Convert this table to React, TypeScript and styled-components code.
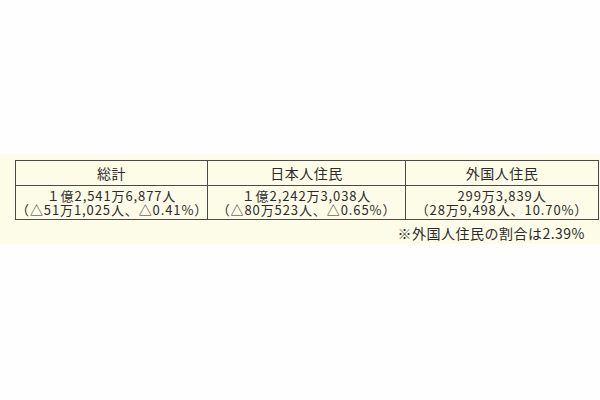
import React from "react";
import styled, { createGlobalStyle } from "styled-components";

const GlobalStyle = createGlobalStyle`
  html, body {
    margin: 0;
    padding: 0;
    background: #fefefe;
  }
  body {
    font-family: "Noto Sans CJK JP", "Noto Sans", sans-serif;
    color: #2b2b2b;
  }
`;

const Band = styled.section`
  margin-top: 154px;
  height: 90px;
  background: #fcfce8;
  padding: 6px 5px 0 15px;
  box-sizing: border-box;
`;

const Table = styled.table`
  width: 580px;
  border-collapse: collapse;
  table-layout: fixed;
`;

const HeadCell = styled.th<{ $w: number }>`
  width: ${(p) => p.$w}px;
  height: 24px;
  padding: 0;
  border: 1px solid #4a4a4a;
  font-size: 14px;
  font-weight: 400;
  text-align: center;
  line-height: 24px;
  letter-spacing: 0.5px;
`;

const Cell = styled.td`
  height: 33px;
  padding: 0;
  border: 1px solid #4a4a4a;
  text-align: center;
  vertical-align: middle;
`;

const Lines = styled.div`
  white-space: nowrap;
  font-size: 13px;
  line-height: 13.5px;
  letter-spacing: 0.9px;
`;

const Note = styled.p`
  margin: 5px 0 0;
  padding-right: 10px;
  text-align: right;
  font-size: 14px;
  line-height: 16px;
  letter-spacing: 0.5px;
`;

const columns = [
  { head: "総計", w: 191, main: "１億2,541万6,877人", sub: "（△51万1,025人、△0.41%）" },
  { head: "日本人住民", w: 197, main: "１億2,242万3,038人", sub: "（△80万523人、△0.65%）" },
  { head: "外国人住民", w: 192, main: "299万3,839人", sub: "（28万9,498人、10.70%）" },
];

export default function App() {
  return (
    <>
      <GlobalStyle />
      <Band>
        <Table>
          <thead>
            <tr>
              {columns.map((c) => (
                <HeadCell key={c.head} $w={c.w}>
                  {c.head}
                </HeadCell>
              ))}
            </tr>
          </thead>
          <tbody>
            <tr>
              {columns.map((c) => (
                <Cell key={c.head}>
                  <Lines>
                    {c.main}
                    <br />
                    {c.sub}
                  </Lines>
                </Cell>
              ))}
            </tr>
          </tbody>
        </Table>
        <Note>※外国人住民の割合は2.39%</Note>
      </Band>
    </>
  );
}
